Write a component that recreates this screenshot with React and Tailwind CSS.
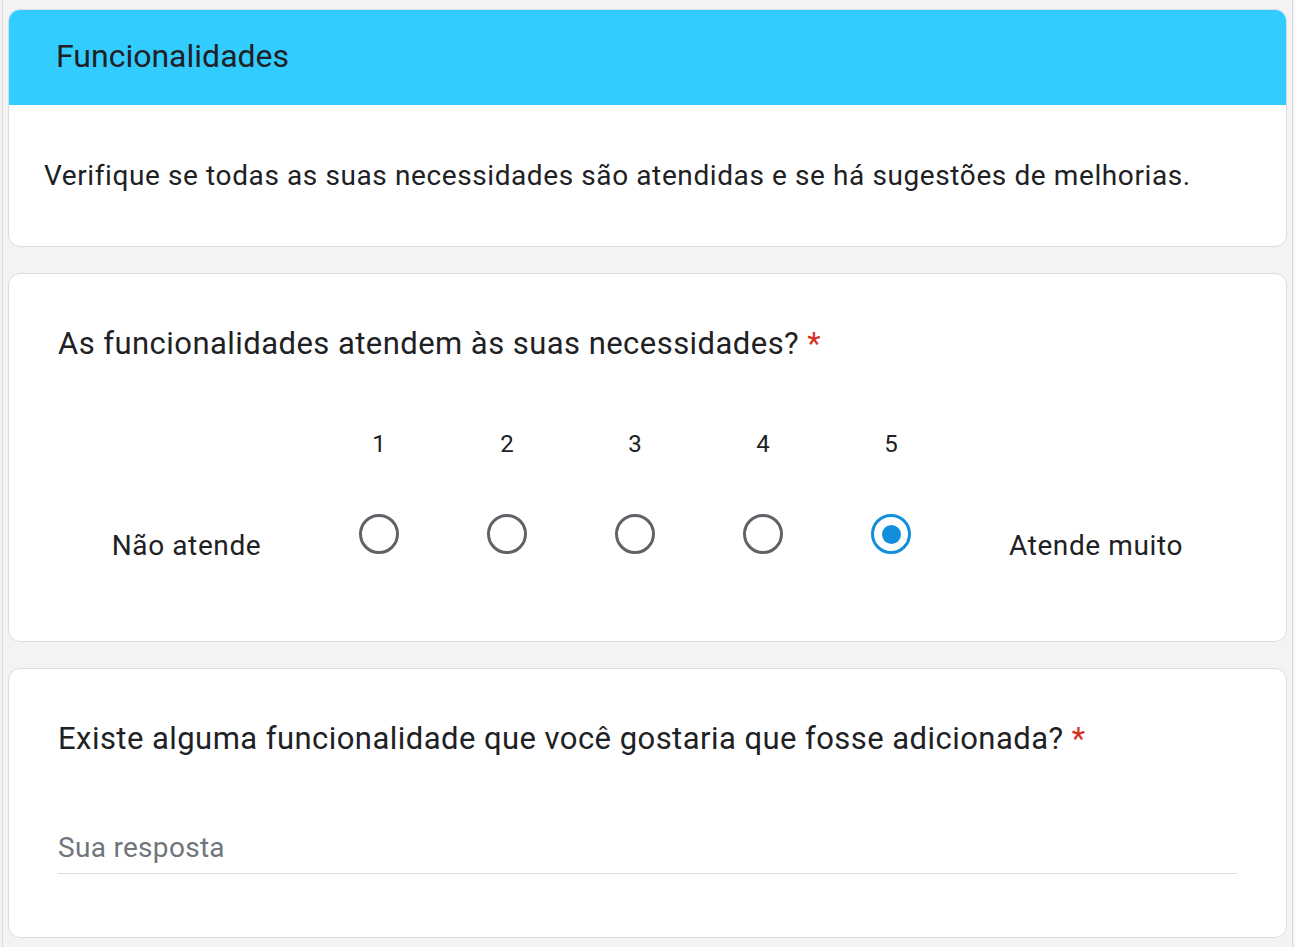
export default function App() {
  const points = [1, 2, 3, 4, 5]
  const selected = 5

  return (
    <div className="h-[947px] w-[1295px] bg-[#f3f3f3] px-[2px] font-['Roboto',sans-serif] text-[#202124]">
      <div className="h-full border-x border-[#dadada] px-[5px] pt-[9px] flex flex-col gap-[26px]">
        <div className="bg-white border border-[#dadce0] rounded-[12px] overflow-hidden">
          <div className="h-[95px] bg-[#33ccff] pl-[47px] pb-[4px] flex items-center">
            <h1 className="text-[32px] leading-[36px]">Funcionalidades</h1>
          </div>
          <p className="pl-[35px] pt-[53px] pb-[52px] text-[28px] leading-[36px] tracking-[0.6px]">
            Verifique se todas as suas necessidades são atendidas e se há sugestões de melhorias.
          </p>
        </div>

        <div className="bg-white border border-[#dadce0] rounded-[12px] pl-[49px] pr-[49px] pt-[52px] pb-[80px]">
          <Question text="As funcionalidades atendem às suas necessidades?" />
          <div className="mt-[67px] flex items-start">
            <div className="w-[257px] mt-[102px] text-center text-[28px] leading-[30px] tracking-[0.6px]">Não atende</div>
            {points.map(n => (
              <div key={n} className="w-[128px] flex flex-col items-center">
                <span className="text-[24px] leading-[30px]">{n}</span>
                <div
                  className={
                    n === selected
                      ? "mt-[55px] w-[40px] h-[40px] rounded-full border-[3px] border-[#128fdc] flex items-center justify-center"
                      : "mt-[55px] w-[40px] h-[40px] rounded-full border-[3px] border-[#5f6368]"
                  }
                >
                  {n === selected && <div className="w-[19px] h-[19px] rounded-full bg-[#128fdc]" />}
                </div>
              </div>
            ))}
            <div className="flex-1 mt-[102px] text-center text-[28px] leading-[30px] tracking-[0.6px]">Atende muito</div>
          </div>
        </div>

        <div className="bg-white border border-[#dadce0] rounded-[12px] pl-[49px] pr-[49px] pt-[52px] pb-[63px]">
          <Question text="Existe alguma funcionalidade que você gostaria que fosse adicionada?" />
          <div className="mt-[76px] pb-[10px] border-b border-[#dadce0] text-[28px] leading-[30px] tracking-[0.3px] text-[#70757a]">
            Sua resposta
          </div>
        </div>
      </div>
    </div>
  )
}

function Question({ text }) {
  return (
    <div className="text-[31px] leading-[36px] tracking-[0.45px]">
      {text} <span className="text-[#d93025]">*</span>
    </div>
  )
}
